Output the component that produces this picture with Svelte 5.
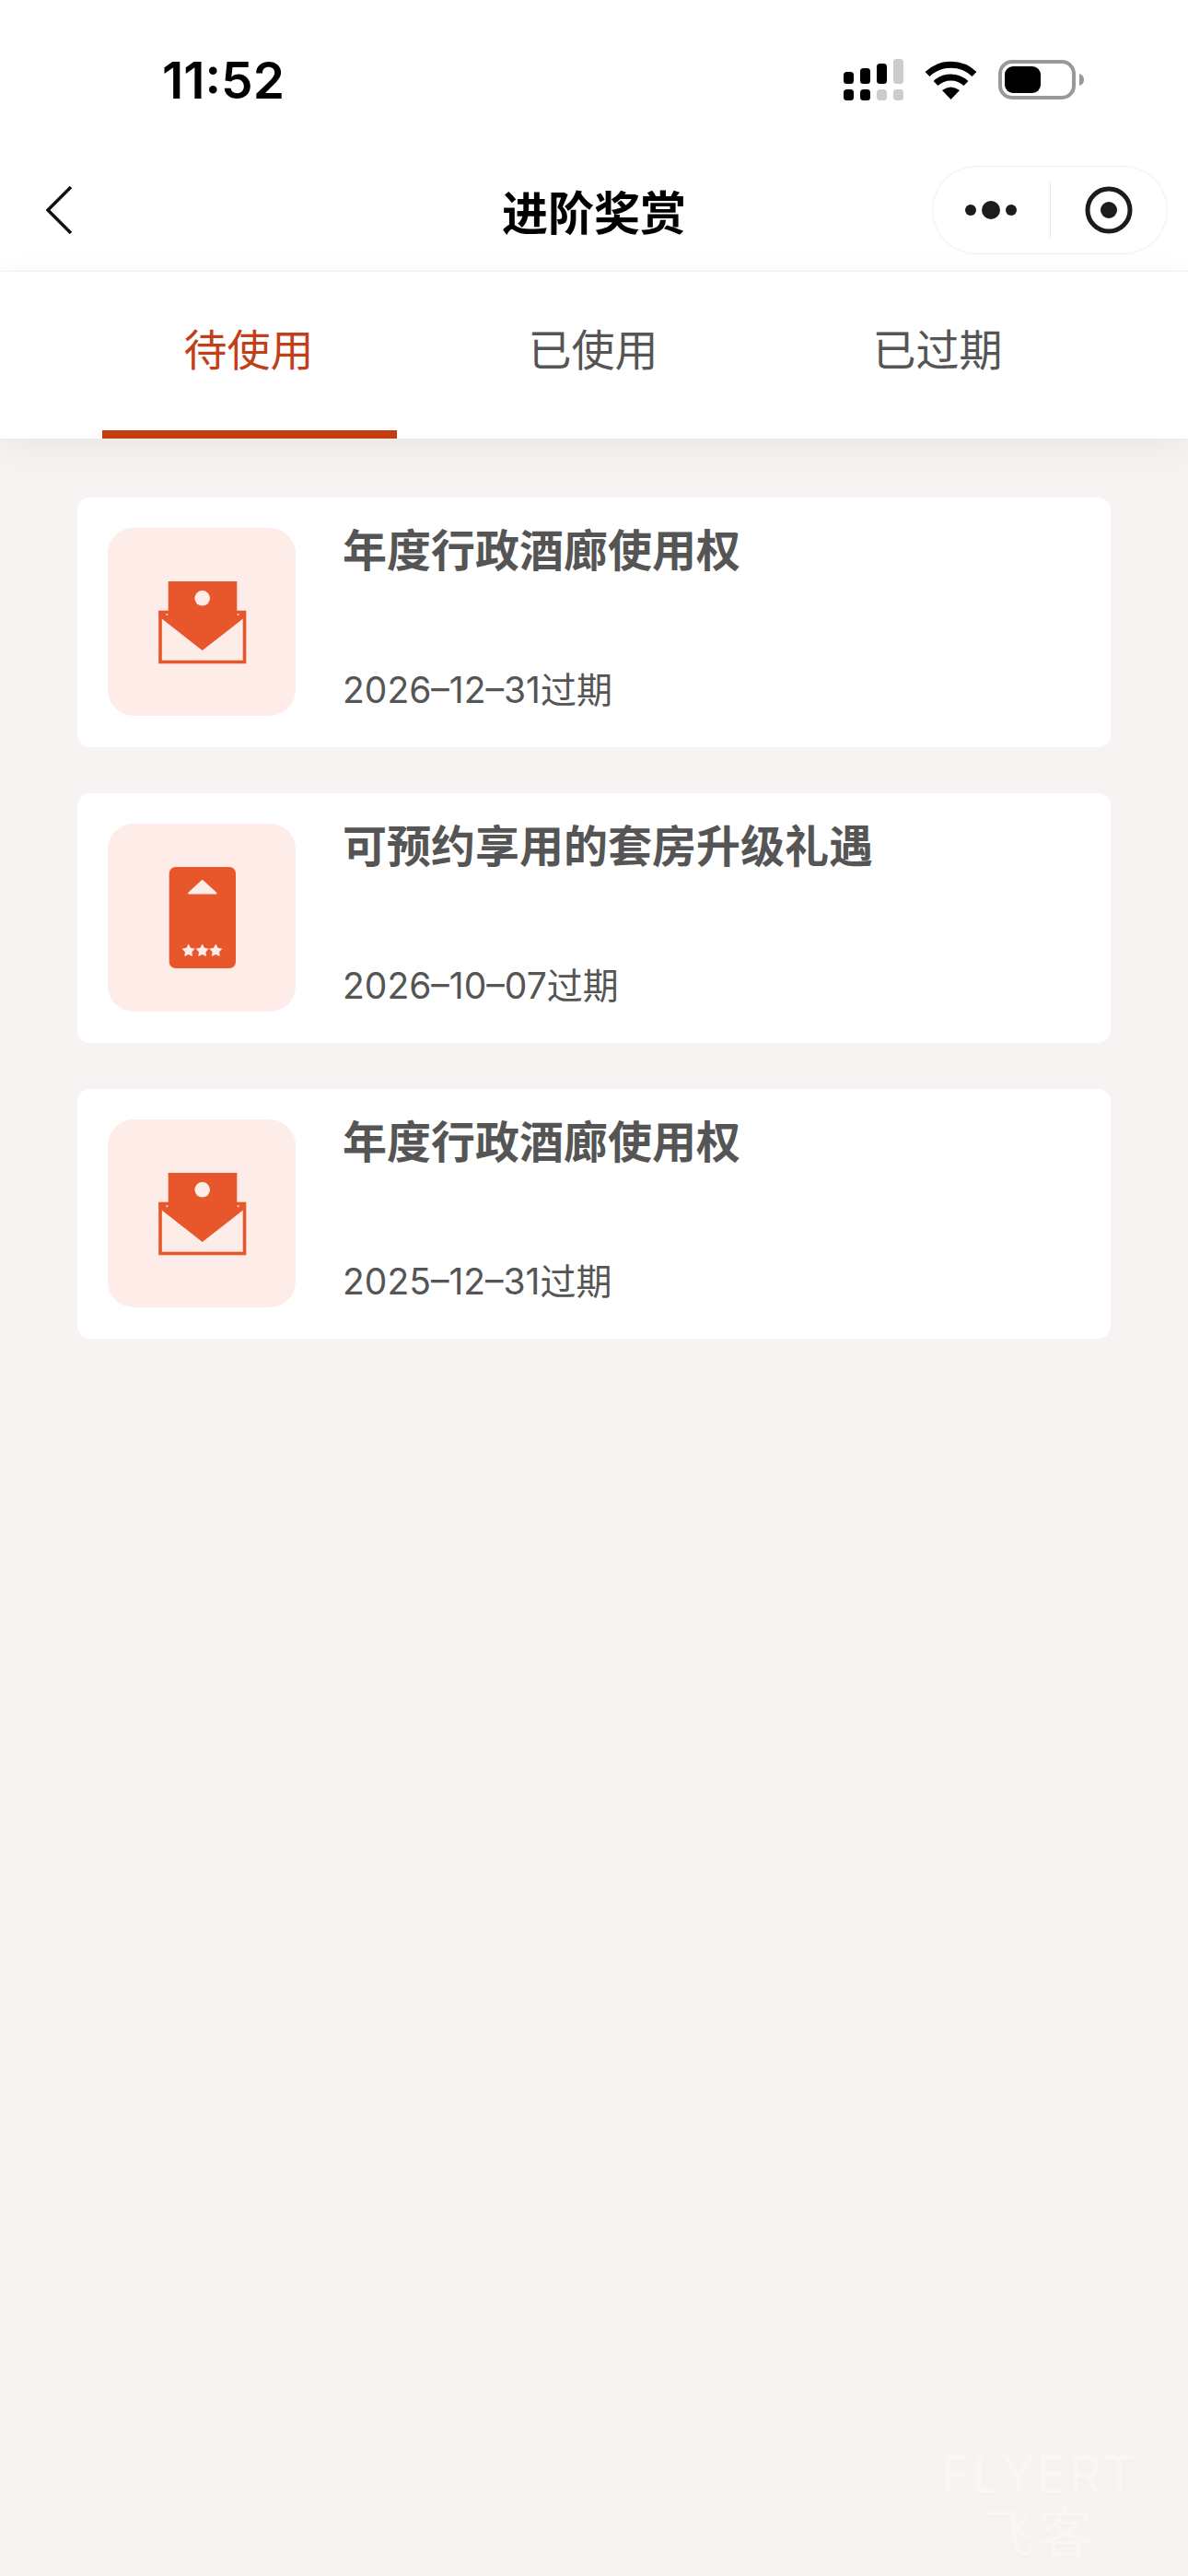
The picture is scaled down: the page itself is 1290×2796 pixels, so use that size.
<script>
  const tabs = ["待使用", "已使用", "已过期"];
  let activeTab = 0;

  const vouchers = [
    { title: "年度行政酒廊使用权", expires: "2026–12–31过期", icon: "envelope" },
    { title: "可预约享用的套房升级礼遇", expires: "2026–10–07过期", icon: "key" },
    { title: "年度行政酒廊使用权", expires: "2025–12–31过期", icon: "envelope" },
  ];

  // five pointed star, used on the room key icon
  function starPoints(cx, cy, r) {
    const pts = [];
    for (let i = 0; i < 10; i++) {
      const rad = i % 2 ? r * 0.52 : r;
      const a = (Math.PI / 5) * i - Math.PI / 2;
      pts.push(`${(cx + rad * Math.cos(a)).toFixed(2)},${(cy + rad * Math.sin(a)).toFixed(2)}`);
    }
    return pts.join(" ");
  }
</script>

<div class="page">
  <div class="status">
    <span class="time">11:52</span>
    <div class="status-icons">
      <svg width="65" height="45" viewBox="0 0 65 45">
        <rect x="0" y="14" width="11" height="13" rx="3.5" fill="#000" />
        <rect x="18" y="10" width="11" height="17" rx="3.5" fill="#000" />
        <rect x="36" y="5" width="11" height="22" rx="3.5" fill="#000" />
        <rect x="54" y="0" width="11" height="27" rx="3.5" fill="#ccc" />
        <rect x="0" y="33" width="11" height="12" rx="3.5" fill="#000" />
        <rect x="18" y="33" width="11" height="12" rx="3.5" fill="#000" />
        <rect x="36" y="33" width="11" height="12" rx="3.5" fill="#ccc" />
        <rect x="54" y="33" width="11" height="12" rx="3.5" fill="#ccc" />
      </svg>
      <svg class="wifi" width="57" height="42" viewBox="0 0 57 42">
        <path d="M3 14.5A37 37 0 0 1 54 14.5" fill="none" stroke="#000" stroke-width="7" />
        <path d="M12 24.5A24 24 0 0 1 45 24.5" fill="none" stroke="#000" stroke-width="7" />
        <path d="M28.5 42L19 32Q28.5 25 38 32Z" fill="#000" />
      </svg>
      <svg class="battery" width="93" height="43" viewBox="0 0 93 43">
        <rect x="2" y="2" width="80" height="39" rx="13" fill="none" stroke="#999" stroke-width="4" />
        <rect x="7" y="7" width="39" height="29" rx="9" fill="#000" />
        <path d="M88 15C91.500 16 93 18.500 93 21.500C93 24.500 91.500 27 88 28Z" fill="#999" />
      </svg>
    </div>
  </div>

  <div class="nav">
    <svg class="back" width="30" height="54" viewBox="0 0 30 54">
      <path d="M27 2L2 27L27 52" fill="none" stroke="#111" stroke-width="3.500" />
    </svg>
    <h1>进阶奖赏</h1>
    <div class="capsule">
      <div class="capsule-btn">
        <svg width="56" height="22" viewBox="0 0 56 22">
          <circle cx="6" cy="11" r="6" fill="#1c1c1c" />
          <circle cx="28" cy="11" r="10" fill="#1c1c1c" />
          <circle cx="50" cy="11" r="6" fill="#1c1c1c" />
        </svg>
      </div>
      <div class="capsule-btn">
        <svg width="52" height="52" viewBox="0 0 52 52">
          <circle cx="26" cy="26" r="23" fill="none" stroke="#1c1c1c" stroke-width="5" />
          <circle cx="26" cy="26" r="9" fill="#1c1c1c" />
        </svg>
      </div>
    </div>
  </div>

  <div class="tabs">
    {#each tabs as tab, i}
      <div class={i === activeTab ? "tab active" : "tab"}>{tab}</div>
    {/each}
  </div>

  <div class="list">
    {#each vouchers as v}
      <div class="card">
        <div class="thumb">
          {#if v.icon === "envelope"}
            <svg width="204" height="204" viewBox="0 0 204 204">
              <rect x="57" y="91.500" width="91.500" height="54" fill="none" stroke="#e8562c" stroke-width="3.600" />
              <path d="M65.700 58H140.300V90H150V96.500L147.500 98L102.700 133L58 98L55.500 96.500V90H65.700Z" fill="#e8562c" />
              <circle cx="102.700" cy="76.300" r="8.300" fill="#fdece7" />
              <circle cx="64.300" cy="94" r="1" fill="#fdece7" />
              <circle cx="141.700" cy="94" r="1" fill="#fdece7" />
            </svg>
          {:else}
            <svg width="204" height="204" viewBox="0 0 204 204">
              <rect x="66.700" y="47" width="72.300" height="110" rx="7" fill="#e8562c" />
              <path d="M102.700 62L117.500 75.500H88Z" fill="#fdece7" stroke="#fdece7" stroke-width="2" stroke-linejoin="round" />
              <polygon points={starPoints(87.700, 138, 7.500)} fill="#fdece7" />
              <polygon points={starPoints(102.700, 138, 7.500)} fill="#fdece7" />
              <polygon points={starPoints(117.300, 138, 7.500)} fill="#fdece7" />
            </svg>
          {/if}
        </div>
        <div class="info">
          <div class="title">{v.title}</div>
          <div class="expires">{v.expires}</div>
        </div>
      </div>
    {/each}
  </div>

  <div class="watermark">
    <span class="wm-en">FLYERT</span>
    <span class="wm-cn">飞客</span>
  </div>
</div>

<style>
  :global(body) {
    margin: 0;
    background: #f7f3f2;
  }

  .page {
    position: relative;
    height: 2796px;
    overflow: hidden;
    background: #f7f3f2;
    font-family: "Inter", "Noto Sans CJK SC", sans-serif;
  }

  .status {
    display: flex;
    justify-content: space-between;
    align-items: center;
    box-sizing: border-box;
    height: 180px;
    padding: 0 113px 7px 176px;
    background: #fff;
  }

  .time {
    font-size: 55px;
    font-weight: 600;
    color: #000;
  }

  .status-icons {
    display: flex;
    align-items: center;
    gap: 23px;
  }

  .nav {
    display: grid;
    grid-template-columns: 1fr auto 1fr;
    align-items: center;
    box-sizing: border-box;
    height: 115px;
    padding-bottom: 19px;
    background: #fff;
    border-bottom: 1px solid #f2f0f0;
  }

  .back {
    margin-left: 50px;
  }

  h1 {
    margin: 0;
    font-size: 50px;
    font-weight: 700;
    color: #000;
  }

  .capsule {
    justify-self: end;
    display: flex;
    align-items: center;
    box-sizing: border-box;
    width: 256px;
    height: 96px;
    margin-right: 22px;
    border: 1px solid #f0eeee;
    border-radius: 48px;
    background: #fff;
  }

  .capsule-btn {
    flex: 1;
    display: flex;
    justify-content: center;
    align-items: center;
    height: 60px;
  }

  .capsule-btn:first-child {
    border-right: 1px solid #e8e8e8;
  }

  .tabs {
    display: grid;
    grid-template-columns: repeat(3, 374px);
    padding: 0 83px;
    height: 181px;
    background: #fff;
    box-shadow: 0 8px 36px rgba(0, 0, 0, 0.06);
  }

  .tab {
    box-sizing: border-box;
    padding-top: 47px;
    text-align: center;
    font-size: 47px;
    color: #555;
  }

  .tab.active {
    position: relative;
    color: #c1401a;
  }

  .tab.active::after {
    content: "";
    position: absolute;
    left: 28px;
    bottom: 0;
    width: 320px;
    height: 9px;
    background: #c43d12;
  }

  .list {
    display: flex;
    flex-direction: column;
    gap: 50px;
    padding: 64px 84px 0;
  }

  .card {
    display: flex;
    box-sizing: border-box;
    height: 271px;
    padding: 33px;
    border-radius: 14px;
    background: #fff;
  }

  .thumb {
    flex: none;
    width: 204px;
    height: 204px;
    border-radius: 28px;
    background: #fdece7;
  }

  .thumb svg {
    display: block;
  }

  .info {
    display: flex;
    flex-direction: column;
    justify-content: space-between;
    margin-left: 51px;
    color: #555;
  }

  .title {
    font-size: 48px;
    font-weight: 700;
    line-height: 50px;
  }

  .expires {
    font-size: 39px;
    line-height: 46px;
    margin-bottom: 6px;
  }

  .watermark {
    position: absolute;
    left: 1028px;
    top: 2655px;
    width: 200px;
    display: flex;
    flex-direction: column;
    align-items: center;
    color: #f9f6f5;
    text-shadow: 0 2px 2px rgba(0, 0, 0, 0.012);
  }

  .wm-en {
    font-size: 56px;
    line-height: 62px;
    letter-spacing: 1px;
  }

  .wm-cn {
    font-size: 58px;
    line-height: 66px;
    letter-spacing: 6px;
  }
</style>
